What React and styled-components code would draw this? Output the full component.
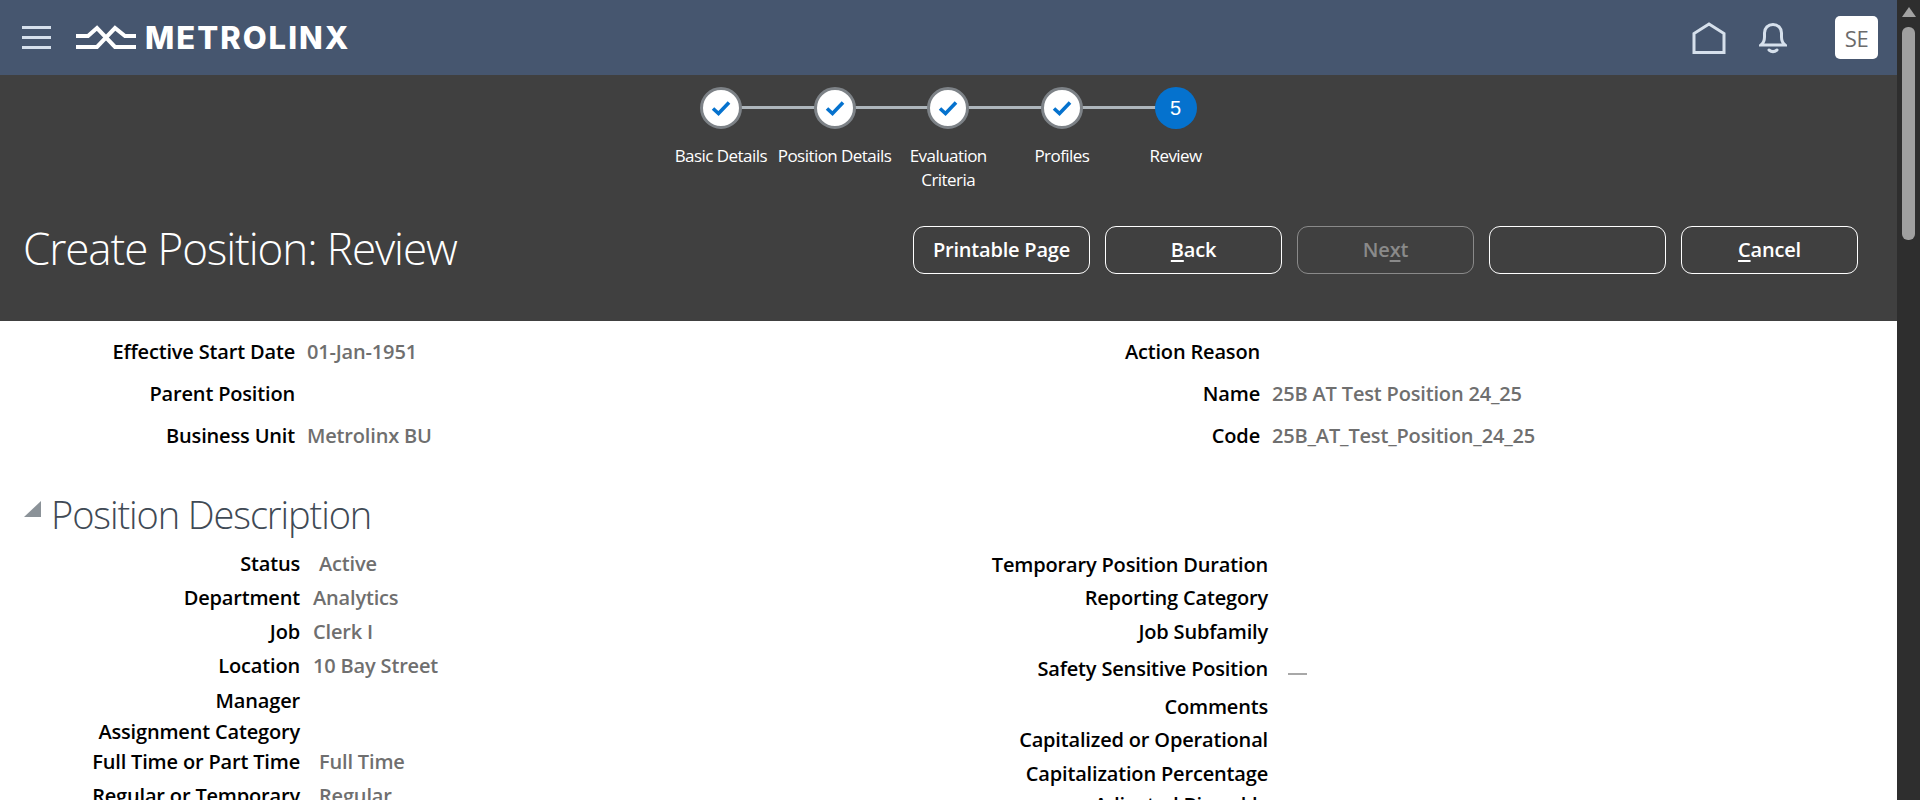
import React from "react";
import styled, { createGlobalStyle } from "styled-components";

const GlobalStyle = createGlobalStyle`
  html, body {
    margin: 0;
    height: 100%;
    overflow: hidden;
    background: #fff;
  }
  body {
    font-family: "Open Sans", "Noto Sans", "Liberation Sans", sans-serif;
  }
`;

const Page = styled.div`
  display: flex;
  width: 1920px;
  height: 800px;
  overflow: hidden;
`;
const Main = styled.div`
  flex: 1;
  min-width: 0;
  overflow: hidden;
`;
const Scrollbar = styled.div`
  width: 23px;
  flex: none;
  background: #2e2e2e;
  display: flex;
  flex-direction: column;
  align-items: center;
  padding-top: 7px;
  gap: 10px;
`;
const ScrollArrow = styled.div`
  width: 0;
  height: 0;
  border-left: 7px solid transparent;
  border-right: 7px solid transparent;
  border-bottom: 10px solid #a3a3a3;
`;
const ScrollThumb = styled.div`
  width: 13px;
  height: 213px;
  border-radius: 6px;
  background: #a0a0a0;
`;

const TopBar = styled.header`
  height: 75px;
  background: #46566f;
  display: flex;
  align-items: center;
  padding: 0 19px 0 22px;
`;
const MenuButton = styled.div`
  width: 29px;
  display: flex;
  flex-direction: column;
  gap: 7px;
  margin-right: 25px;
`;
const MenuLine = styled.span`
  display: block;
  height: 3px;
  background: #d6e0ec;
`;
const LogoWrap = styled.div`
  display: flex;
  align-items: center;
  gap: 9px;
  flex: 1;
`;
const LogoText = styled.span`
  font-family: "Inter", sans-serif;
  font-weight: 800;
  font-size: 31px;
  letter-spacing: 2px;
  color: #fff;
  line-height: 1;
`;
const TopIcons = styled.div`
  display: flex;
  align-items: center;
`;
const IconSlot = styled.div`
  display: flex;
  margin-right: ${props => props.$mr}px;
`;
const Avatar = styled.div`
  width: 43px;
  height: 43px;
  border-radius: 5px;
  background: #fff;
  color: #6b6b6b;
  font-size: 22px;
  letter-spacing: -0.5px;
  display: flex;
  align-items: center;
  justify-content: center;
`;

const DarkPanel = styled.section`
  height: 246px;
  background: #404040;
  color: #fff;
`;
const Train = styled.ol`
  list-style: none;
  margin: 0;
  padding: 12px 0 0 664px;
  display: flex;
`;
const Stop = styled.li`
  width: 113.7px;
  display: flex;
  flex-direction: column;
  align-items: center;
  position: relative;
  &:not(:last-child)::after {
    content: "";
    position: absolute;
    top: 19px;
    left: 50%;
    width: 100%;
    height: 3px;
    background: #aeb6bc;
  }
`;
const StopCircle = styled.div`
  width: 42px;
  height: 42px;
  box-sizing: border-box;
  border-radius: 50%;
  position: relative;
  z-index: 1;
  display: flex;
  align-items: center;
  justify-content: center;
  background: ${props => (props.$current ? "#0572ce" : "#fff")};
  border: ${props => (props.$current ? "none" : "3px solid #7d8287")};
  color: #fff;
  font-family: "Liberation Sans", sans-serif;
  font-size: 20px;
`;
const StopLabel = styled.div`
  margin-top: 15px;
  font-size: 17px;
  line-height: 24px;
  letter-spacing: -0.55px;
  text-align: center;
  white-space: pre-line;
`;
const TitleRow = styled.div`
  display: flex;
  align-items: center;
  justify-content: space-between;
  padding: 0 39px 0 23px;
  margin-top: 26px;
`;
const Title = styled.h1`
  margin: 0 0 4px;
  font-size: 44px;
  font-weight: 300;
  letter-spacing: -1.1px;
`;
const Buttons = styled.div`
  display: flex;
  gap: 15px;
`;
const Button = styled.div`
  width: 177px;
  height: 48px;
  box-sizing: border-box;
  padding-bottom: 2px;
  border-radius: 11px;
  border: 1px solid ${props => (props.$disabled ? "#8a8a8a" : "#fff")};
  color: ${props => (props.$disabled ? "#8a8a8a" : "#fff")};
  font-size: 20px;
  font-weight: 600;
  letter-spacing: -0.2px;
  display: flex;
  align-items: center;
  justify-content: center;
  u {
    text-underline-offset: 3px;
  }
`;

const Body = styled.main`
  padding-top: 9px;
`;
const TwoCols = styled.div`
  display: flex;
  align-items: flex-start;
  margin-top: ${props => props.$mt || 0}px;
`;
const Form = styled.dl`
  margin: ${props => props.$mt || 0}px 0 0;
  width: ${props => props.$width}px;
  flex: none;
`;
const Row = styled.div`
  display: flex;
  align-items: center;
  height: ${props => props.$h}px;
`;
const Label = styled.dt`
  flex: none;
  width: ${props => props.$w}px;
  text-align: right;
  font-size: 20px;
  font-weight: 600;
  color: #000;
  white-space: nowrap;
  letter-spacing: -0.17px;
`;
const Value = styled.dd`
  margin: 0 0 0 ${props => props.$gap || 12}px;
  font-size: 20px;
  font-weight: 600;
  color: #6f6f6f;
  white-space: nowrap;
  letter-spacing: -0.17px;
`;
const Dash = styled.span`
  display: block;
  width: 19px;
  height: 2px;
  margin: 10px 0 0 20px;
  background: #a8a8a8;
`;
const SectionHead = styled.div`
  display: flex;
  align-items: flex-end;
  padding-left: 24px;
  margin-top: 30px;
  gap: 10px;
  height: 56px;
`;
const Twisty = styled.span`
  width: 0;
  height: 0;
  margin-bottom: 25px;
  border-left: 17px solid transparent;
  border-bottom: 16px solid #8b9298;
`;
const SectionTitle = styled.h2`
  margin: 0;
  font-size: 38px;
  font-weight: 300;
  color: #3f4a55;
  letter-spacing: -1.1px;
  line-height: 56px;
`;

const steps = ["Basic Details", "Position Details", "Evaluation\nCriteria", "Profiles"];

const topLeft = [
  ["Effective Start Date", "01-Jan-1951"],
  ["Parent Position", ""],
  ["Business Unit", "Metrolinx BU"],
];
const topRight = [
  ["Action Reason", ""],
  ["Name", "25B AT Test Position 24_25"],
  ["Code", "25B_AT_Test_Position_24_25"],
];
const descLeft = [
  ["Status", "Active", 34, 19],
  ["Department", "Analytics", 34, 13],
  ["Job", "Clerk I", 34, 13],
  ["Location", "10 Bay Street", 35, 13],
  ["Manager", "", 34],
  ["Assignment Category", "", 28],
  ["Full Time or Part Time", "Full Time", 33, 19],
  ["Regular or Temporary", "Regular", 34, 19],
];
const descRight = [
  ["Temporary Position Duration", null, 34],
  ["Reporting Category", null, 33],
  ["Job Subfamily", null, 34],
  ["Safety Sensitive Position", "dash", 41],
  ["Comments", null, 34],
  ["Capitalized or Operational", null, 33],
  ["Capitalization Percentage", null, 34],
  ["Adjusted Biweekly", null, 28],
];

const Check = () => (
  <svg width="22" height="18" viewBox="0 0 22 18">
    <path d="M3 9.500l5.500 5L19 3.500" fill="none" stroke="#0572ce" strokeWidth="3.600" />
  </svg>
);

export default function App() {
  return (
    <Page>
      <GlobalStyle />
      <Main>
        <TopBar>
          <MenuButton>
            <MenuLine />
            <MenuLine />
            <MenuLine />
          </MenuButton>
          <LogoWrap>
            <svg width="60" height="25" viewBox="0 0 60 25" fill="none" stroke="#fff" strokeWidth="4">
              <path d="M0 11h12l9-8 18 19h21" />
              <path d="M0 22h21L39 3l10 8h11" />
            </svg>
            <LogoText>METROLINX</LogoText>
          </LogoWrap>
          <TopIcons>
            <IconSlot $mr={33}>
              <svg width="34" height="32" viewBox="0 0 34 32" fill="none" stroke="#d6e0ec" strokeWidth="3">
                <path d="M2 30.500V11.500L17 2l15 9.500v19z" />
              </svg>
            </IconSlot>
            <IconSlot $mr={48}>
              <svg width="28" height="32" viewBox="0 0 28 32" fill="none" stroke="#d6e0ec" strokeWidth="3" strokeLinecap="round">
                <path d="M2 23h24c-2.500-2-3.500-4-3.500-8V11c0-5-3.500-8.500-8.500-8.500S5.500 6 5.500 11v4c0 4-1 6-3.500 8z" />
                <path d="M10 28c2.500 2 5.500 2 8 0" />
              </svg>
            </IconSlot>
            <Avatar>SE</Avatar>
          </TopIcons>
        </TopBar>

        <DarkPanel>
          <Train>
            {steps.map(step => (
              <Stop key={step}>
                <StopCircle>
                  <Check />
                </StopCircle>
                <StopLabel>{step}</StopLabel>
              </Stop>
            ))}
            <Stop>
              <StopCircle $current>5</StopCircle>
              <StopLabel>Review</StopLabel>
            </Stop>
          </Train>
          <TitleRow>
            <Title>Create Position: Review</Title>
            <Buttons>
              <Button>Printable Page</Button>
              <Button>
                <span><u>B</u>ack</span>
              </Button>
              <Button $disabled>
                <span>Ne<u>x</u>t</span>
              </Button>
              <Button />
              <Button>
                <span><u>C</u>ancel</span>
              </Button>
            </Buttons>
          </TitleRow>
        </DarkPanel>

        <Body>
          <TwoCols>
            <Form $width={965}>
              {topLeft.map(([label, value]) => (
                <Row key={label} $h={42}>
                  <Label $w={295}>{label}</Label>
                  <Value>{value}</Value>
                </Row>
              ))}
            </Form>
            <Form $width={900}>
              {topRight.map(([label, value]) => (
                <Row key={label} $h={42}>
                  <Label $w={295}>{label}</Label>
                  <Value>{value}</Value>
                </Row>
              ))}
            </Form>
          </TwoCols>

          <SectionHead>
            <Twisty />
            <SectionTitle>Position Description</SectionTitle>
          </SectionHead>

          <TwoCols $mt={4}>
            <Form $width={970}>
              {descLeft.map(([label, value, h, gap]) => (
                <Row key={label} $h={h}>
                  <Label $w={300}>{label}</Label>
                  <Value $gap={gap}>{value}</Value>
                </Row>
              ))}
            </Form>
            <Form $width={900} $mt={1}>
              {descRight.map(([label, value, h]) => (
                <Row key={label} $h={h}>
                  <Label $w={298}>{label}</Label>
                  {value === "dash" && <Dash />}
                </Row>
              ))}
            </Form>
          </TwoCols>
        </Body>
      </Main>
      <Scrollbar>
        <ScrollArrow />
        <ScrollThumb />
      </Scrollbar>
    </Page>
  );
}
